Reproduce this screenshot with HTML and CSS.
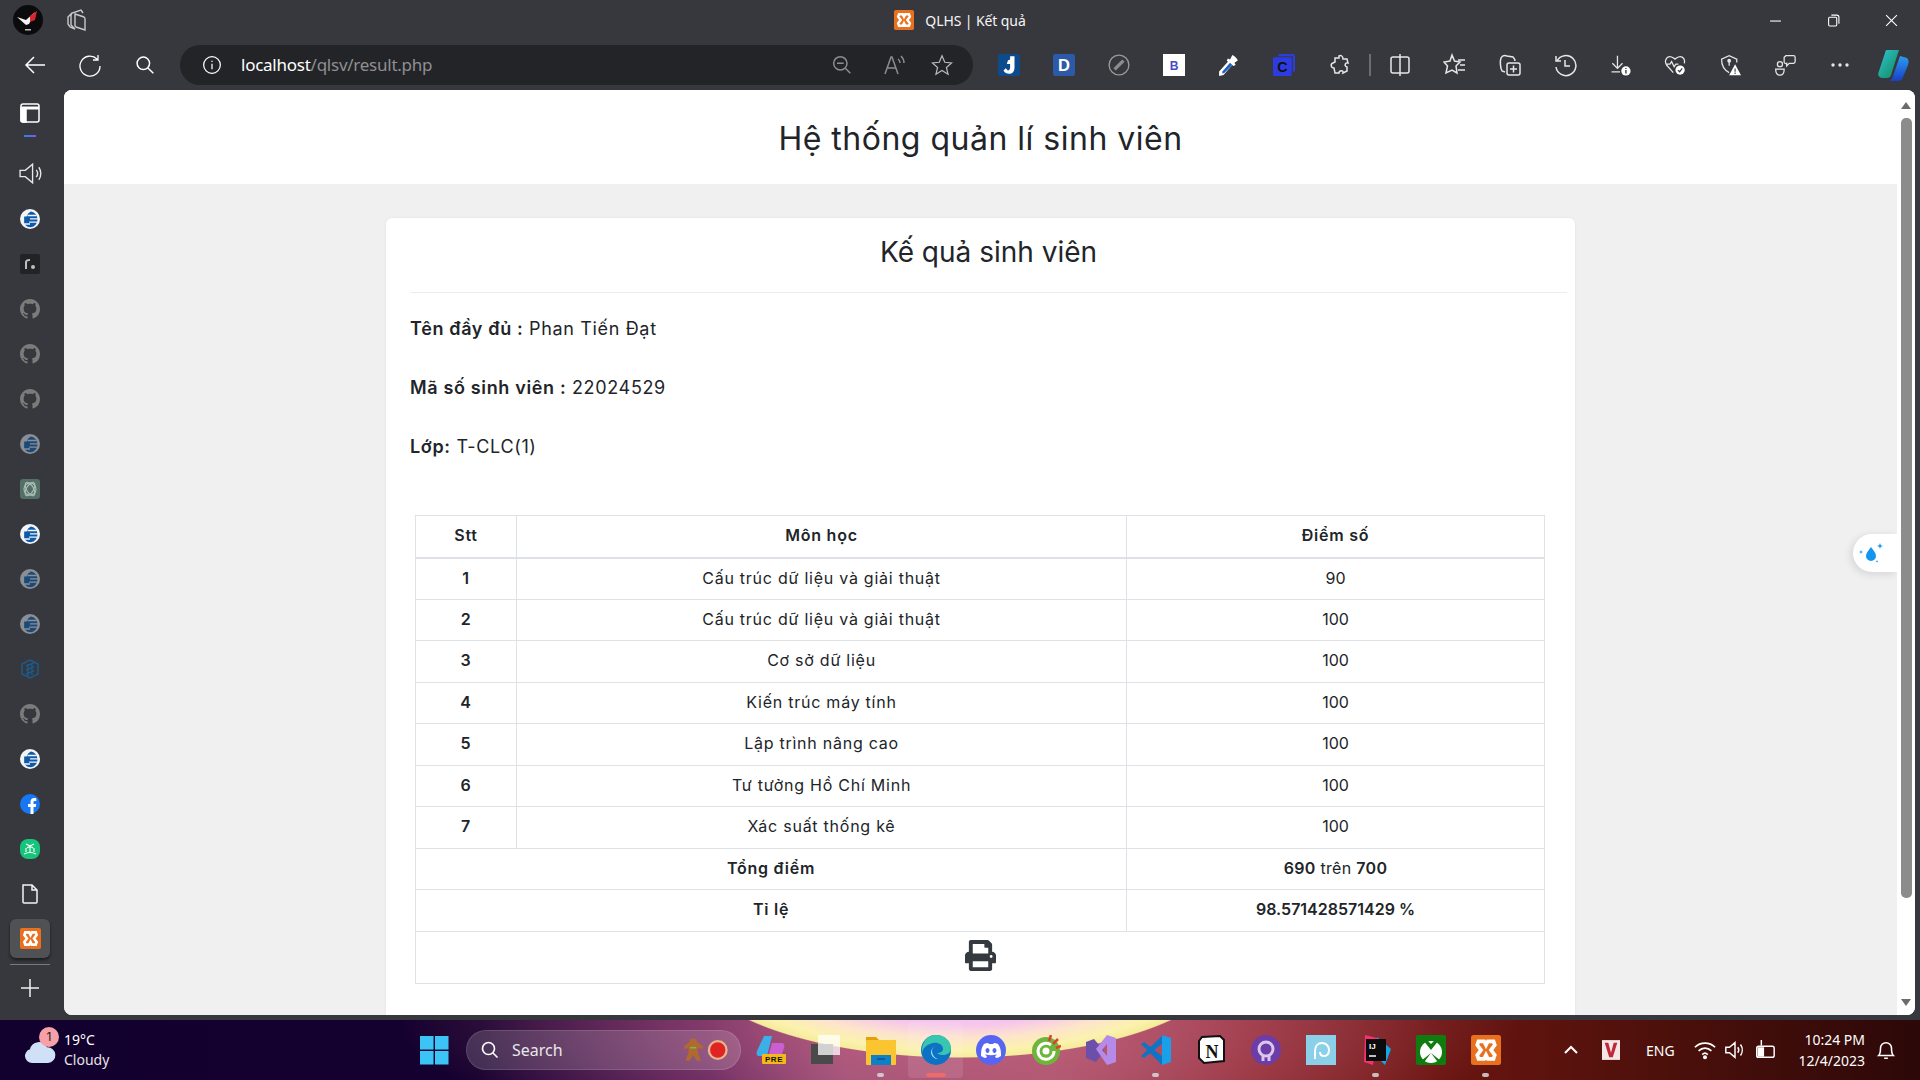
FILE: index.html
```html
<!DOCTYPE html>
<html lang="vi">
<head>
<meta charset="utf-8">
<title>QLHS | Kết quả</title>
<link rel="stylesheet" href="styles.css">
</head>
<body>
<svg class="defs" width="0" height="0">
  <defs>
    <symbol id="gh" viewBox="0 0 16 16"><path fill="#7b7b7b" d="M8 0C3.58 0 0 3.58 0 8c0 3.54 2.29 6.53 5.47 7.59.4.07.55-.17.55-.38 0-.19-.01-.82-.01-1.49-2.01.37-2.53-.49-2.69-.94-.09-.23-.48-.94-.82-1.13-.28-.15-.68-.52-.01-.53.63-.01 1.08.58 1.23.82.72 1.21 1.87.87 2.33.66.07-.52.28-.87.51-1.07-1.78-.2-3.64-.89-3.64-3.95 0-.87.31-1.59.82-2.15-.08-.2-.36-1.02.08-2.12 0 0 .67-.21 2.2.82.64-.18 1.32-.27 2-.27s1.36.09 2 .27c1.53-1.04 2.2-.82 2.2-.82.44 1.1.16 1.92.08 2.12.51.56.82 1.27.82 2.15 0 3.07-1.87 3.75-3.65 3.95.29.25.54.73.54 1.48 0 1.07-.01 1.93-.01 2.2 0 .21.15.46.55.38A8.01 8.01 0 0 0 16 8c0-4.42-3.58-8-8-8z"/></symbol>
    <symbol id="ce" viewBox="0 0 24 24"><circle cx="12" cy="12" r="12" fill="#f2f5f8"/><path fill="#0f5aa8" d="M13 3a9.500 9.500 0 0 1 8 9 9.500 9.500 0 0 1-8 10c-3 0-5-1-7-3h6v-2H5V9h3a9 9 0 0 1 5-6z"/><path fill="#f2f5f8" d="M9 7h11v1.600H9zM12 11h10v1.500H12zM11 15h10v1.600H11z"/></symbol>
    <symbol id="ced" viewBox="0 0 24 24"><circle cx="12" cy="12" r="12" fill="#8a8f95"/><path fill="#1c4a78" d="M13 3a9.500 9.500 0 0 1 8 9 9.500 9.500 0 0 1-8 10c-3 0-5-1-7-3h6v-2H5V9h3a9 9 0 0 1 5-6z"/><path fill="#8a8f95" d="M9 7h11v1.600H9zM12 11h10v1.500H12zM11 15h10v1.600H11z"/></symbol>
    <symbol id="xa" viewBox="0 0 24 24"><rect width="24" height="24" rx="2" fill="#e8701f"/><path fill="none" stroke="#fff" stroke-width="3" d="M6 5h4.500l1.500 3 1.500-3H18l1 3-3 4 3 4-1 3h-4.500L12 16l-1.500 3H6l-1-3 3-4-3-4z"/></symbol>
  </defs>
</svg>

<div class="window">
  <header class="titlebar">
    <div class="tb-left">
      <svg class="rog" viewBox="0 0 30 30"><circle cx="15" cy="15" r="15" fill="#0b0b0d"/><path fill="#f4f4f4" d="M4 12l9 3 9-8-6 12-3 1z"/><path fill="#d9262e" d="M17 11l7-5-2 9-5 2z"/><rect x="12" y="24" width="6" height="1.500" fill="#bbb"/></svg>
      <svg class="wico" viewBox="0 0 24 24" fill="none" stroke="#c9c9cb" stroke-width="1.400"><path d="M10 6l9 3a2 2 0 0 1 1 2v11l-9-3a2 2 0 0 1-1-2zM6 7l1-2 9-3 2 3M3 9l3-3v11l4 4-5-2-2-3z"/></svg>
    </div>
    <div class="tb-title"><svg class="fav" viewBox="0 0 24 24"><use href="#xa"/></svg><span>QLHS | Kết quả</span></div>
    <div class="tb-controls">
      <svg class="wbtn" viewBox="0 0 12 12" stroke="#fff" fill="none"><path d="M1 6.500h10"/></svg>
      <svg class="wbtn" viewBox="0 0 12 12" stroke="#fff" fill="none"><rect x="1.500" y="3" width="7.500" height="8" rx="1"/><path d="M4 1h5a2 2 0 0 1 2 2v6"/></svg>
      <svg class="wbtn" viewBox="0 0 12 12" stroke="#fff" fill="none"><path d="M1 1l10 10M11 1L1 11"/></svg>
    </div>
  </header>

  <nav class="toolbar">
    <div class="nav-btns">
      <div class="cell"><svg class="ico" viewBox="0 0 24 24" fill="none" stroke="#fff" stroke-width="1.500"><path d="M22 12H3M11 4l-8 8 8 8"/></svg></div>
      <div class="cell"><svg class="ico" viewBox="0 0 24 24" fill="none" stroke="#fff" stroke-width="1.300"><path d="M19 6a10 10 0 1 0 3 7M20 2v5h-5"/></svg></div>
      <div class="cell"><svg class="ico ico-s" viewBox="0 0 24 24" fill="none" stroke="#fff" stroke-width="1.800"><circle cx="10" cy="10" r="7.500"/><path d="M15.500 15.500L22 22"/></svg></div>
    </div>
    <div class="urlbar">
      <svg class="ico info" viewBox="0 0 24 24" fill="none" stroke="#fff" stroke-width="1.500"><circle cx="12" cy="12" r="10"/><path d="M12 10.500V17M12 7v1.500"/></svg>
      <span class="url"><b>localhost</b>/qlsv/result.php</span>
      <div class="url-right">
        <svg class="ico ico-s url-zoom" viewBox="0 0 24 24" fill="none" stroke="#8d8d90" stroke-width="1.800"><circle cx="10" cy="10" r="8"/><path d="M6 10h8M16 16l6 6"/></svg>
        <svg class="ico" viewBox="0 0 24 24" fill="none" stroke="#8d8d90" stroke-width="1.500"><path d="M3 21L9 4h1l6 17M5.500 15h8M16 6c1.500 1 2 2.500 2 4M19 3c2 2 3 4 3 7"/></svg>
        <svg class="ico ico-l" viewBox="0 0 24 24" fill="none" stroke="#bcbcbe" stroke-width="1.300"><path d="M12 2l3 7 7.500.7-5.700 5 1.800 7.300-6.600-4-6.600 4 1.800-7.300-5.700-5L9 9z"/></svg>
      </div>
    </div>
    <div class="tools">
      <div class="cell"><svg class="ico ico-l" viewBox="0 0 20 20"><rect width="20" height="20" rx="2" fill="#0d4b8c"/><path fill="#fff" d="M11 2h4v10c0 4-2 6-5 6-2 0-4-1-5-3l2-2 2 2c1 0 2-1 2-3V9H8l1-3 2-1z"/></svg></div>
      <div class="cell"><svg class="ico ico-l" viewBox="0 0 20 20"><rect width="20" height="20" rx="2" fill="#2d5aa8"/><text x="10" y="15.500" class="ictext">D</text></svg></div>
      <div class="cell"><svg class="ico ico-l" viewBox="0 0 20 20" fill="none"><circle cx="10" cy="10" r="9" stroke="#9a9a9c" stroke-width="1.200"/><path d="M6 14l8-8" stroke="#8d8d8f" stroke-width="3"/></svg></div>
      <div class="cell"><svg class="ico ico-l" viewBox="0 0 20 20"><rect width="20" height="20" fill="#fff"/><text x="10" y="14.500" class="ictext ictext-b">B</text></svg></div>
      <div class="cell"><svg class="ico ico-l" viewBox="0 0 20 20"><path fill="#fff" d="M13 1l2 1 2 2 1 2-3 2 1 2-2 1-1-1-8 9-4 1 0-4 8-9-1-1 1-2 2 1z"/><path fill="#1e5fc0" d="M11 8l2 2-7 7-2 1 0-2z"/></svg></div>
      <div class="cell"><svg class="ico ico-l" viewBox="0 0 20 20"><path fill="#2c3ce0" d="M5 0h13a2 2 0 0 1 2 2v14h-2V2H5z"/><rect y="3" width="17" height="17" rx="1" fill="#2c3ce0"/><text x="8.500" y="16" class="ictext ictext-d">C</text></svg></div>
      <div class="cell cell-ext"><svg class="ico" viewBox="0 0 24 24" fill="none" stroke="#e6e6e6" stroke-width="1.500"><path d="M10 3c2-1 4 0 4 3h4l1 4c-3-1-4 3-1 4v4l-4 2c1-3-4-3-4 0H6l-1-5c-3 0-4-4-1-5l2-1V5h4z"/></svg></div>
      <div class="sep"></div>
      <div class="cell"><svg class="ico" viewBox="0 0 24 24" fill="none" stroke="#e6e6e6" stroke-width="1.500"><rect x="3" y="4" width="18" height="16" rx="2"/><path d="M12 1v22"/></svg></div>
      <div class="cell"><svg class="ico" viewBox="0 0 24 24" fill="none" stroke="#e6e6e6" stroke-width="1.500"><path d="M9 2l2.500 6L17 9l-4 4 1 7-5-3-6 3 1.500-7L1 9l6-1zM15 7h7M17 12h5M15 17h7"/></svg></div>
      <div class="cell"><svg class="ico" viewBox="0 0 24 24" fill="none" stroke="#e6e6e6" stroke-width="1.500"><path d="M7 19l-3-1c-2-4-2-10-1-13 1-2 3-3 6-2l6 1c1 1 2 2 2 4"/><rect x="9" y="10" width="13" height="12" rx="2"/><path d="M15.500 12.500v7M12 16h7"/></svg></div>
      <div class="cell"><svg class="ico" viewBox="0 0 24 24" fill="none" stroke="#e6e6e6" stroke-width="1.500"><path d="M4 8a10 10 0 1 1-1 6M3 3v5h5M12 7v6h5"/></svg></div>
      <div class="cell"><svg class="ico ico-l" viewBox="0 0 26 26" fill="none" stroke="#e6e6e6" stroke-width="1.500"><path d="M10 2v15M4 11l6 6 6-6M3 21h10"/><circle cx="20" cy="20" r="5.500" fill="#fff" stroke="none"/><path d="M20 19v4M20 16.500v1.200" stroke="#37383d" stroke-width="1.600"/></svg></div>
      <div class="cell"><svg class="ico ico-l" viewBox="0 0 26 26" fill="none" stroke="#e6e6e6" stroke-width="1.500"><path d="M11 22l-8-9C0 8 3 3 7 3c3 0 4 2 6 3 2-1 3-3 6-3 4 0 6 4 5 8M2 12h5l2-3 3 6 2-3h3"/><circle cx="19" cy="19" r="5.500" fill="#fff" stroke="none"/><path d="M16.500 19l2 2 3-4" stroke="#37383d"/></svg></div>
      <div class="cell"><svg class="ico ico-l" viewBox="0 0 26 26" fill="none" stroke="#e6e6e6" stroke-width="1.500"><path d="M12 22C6 19 3 15 3 6l9-4 9 4v4M12 8v6"/><circle cx="12" cy="8" r="1.500" fill="#e6e6e6"/><path d="M19 12l7 13H12z" fill="#fff" stroke="none"/><path d="M19 17v4M19 22v1.500" stroke="#37383d" stroke-width="1.300"/></svg></div>
      <div class="cell"><svg class="ico ico-l" viewBox="0 0 26 26" fill="none" stroke="#e6e6e6" stroke-width="1.500"><circle cx="7" cy="12" r="3"/><path d="M2 18h10c0 5-2 7-5 7s-5-2-5-7zM14 2h9a2 2 0 0 1 2 2v5a2 2 0 0 1-2 2h-5l-3 3v-3a2 2 0 0 1-3-2V4z"/></svg></div>
      <div class="cell"><svg class="ico" viewBox="0 0 24 24" fill="#e6e6e6"><circle cx="5" cy="12" r="1.700"/><circle cx="12" cy="12" r="1.700"/><circle cx="19" cy="12" r="1.700"/></svg></div>
      <div class="cell cell-end"><svg class="ico ico-xl" viewBox="0 0 32 32"><defs><linearGradient id="cpa" x1="0" y1="0" x2="1" y2="1"><stop offset="0" stop-color="#2ec4d8"/><stop offset=".7" stop-color="#1a9a7c"/><stop offset="1" stop-color="#37c773"/></linearGradient><linearGradient id="cpb" x1="0" y1="0" x2="0" y2="1"><stop offset="0" stop-color="#2b9cf0"/><stop offset="1" stop-color="#1a3fc4"/></linearGradient></defs><path fill="url(#cpa)" d="M10 1h12l-1 3-7 22c-1 2-2 3-4 3H6C2 29 0 26 2 22L8 4c0-2 1-3 2-3z"/><path fill="url(#cpb)" d="M23 7l7 2c2 2 2 4 1 7l-5 12c-1 3-3 4-5 4H12c2-1 3-2 4-5z"/></svg></div>
    </div>
  </nav>

  <div class="body-row">
    <aside class="sidebar">
      <div class="side-top">
        <svg class="side-ico" viewBox="0 0 20 20" fill="none" stroke="#fff" stroke-width="1.500"><rect x="1" y="1" width="18" height="18" rx="2"/><path d="M1 5h18" stroke-width="3"/><path fill="#fff" d="M1 5h5v14H3a2 2 0 0 1-2-2z"/></svg>
      </div>
      <div class="side-strip"></div>
      <div class="side-item"><svg class="side-ico side-sound" viewBox="0 0 24 24" fill="none" stroke="#e8e8e8" stroke-width="1.300"><path d="M2 9h5l7-6v18l-7-6H2zM17.500 8.500c1.500 2 1.500 5 0 7M20 6c2.500 3.500 2.500 8.500 0 12"/></svg></div>
      <div class="side-item"><svg class="side-ico" viewBox="0 0 24 24"><use href="#ce"/></svg></div>
      <div class="side-item"><svg class="side-ico" viewBox="0 0 20 20"><rect width="20" height="20" rx="2" fill="#222326"/><path fill="#bdbdbd" d="M5 15V8c0-2 2-3 5-3v2c-2 0-3 0-3 2v6z"/><circle cx="13" cy="13" r="2" fill="#bdbdbd"/></svg></div>
      <div class="side-item"><svg class="side-ico" viewBox="0 0 16 16"><use href="#gh"/></svg></div>
      <div class="side-item"><svg class="side-ico" viewBox="0 0 16 16"><use href="#gh"/></svg></div>
      <div class="side-item"><svg class="side-ico" viewBox="0 0 16 16"><use href="#gh"/></svg></div>
      <div class="side-item"><svg class="side-ico" viewBox="0 0 24 24"><use href="#ced"/></svg></div>
      <div class="side-item"><svg class="side-ico" viewBox="0 0 20 20"><rect width="20" height="20" rx="3" fill="#546f66"/><g fill="none" stroke="#a9bdb5" stroke-width="1.200"><circle cx="10" cy="10" r="6"/><ellipse cx="10" cy="10" rx="7.500" ry="3.500" transform="rotate(60 10 10)"/><ellipse cx="10" cy="10" rx="7.500" ry="3.500" transform="rotate(-60 10 10)"/></g></svg></div>
      <div class="side-item"><svg class="side-ico" viewBox="0 0 24 24"><use href="#ce"/></svg></div>
      <div class="side-item"><svg class="side-ico" viewBox="0 0 24 24"><use href="#ced"/></svg></div>
      <div class="side-item"><svg class="side-ico" viewBox="0 0 24 24"><use href="#ced"/></svg></div>
      <div class="side-item"><svg class="side-ico" viewBox="0 0 20 20" fill="none" stroke="#1c5a8a" stroke-width="1.500"><path d="M10 1l8 4v10l-8 4-8-4V5zM6 7l8-3M6 11l8-3M6 15l8-3M8 5v12M12 4v12"/></svg></div>
      <div class="side-item"><svg class="side-ico" viewBox="0 0 16 16"><use href="#gh"/></svg></div>
      <div class="side-item"><svg class="side-ico" viewBox="0 0 24 24"><use href="#ce"/></svg></div>
      <div class="side-item"><svg class="side-ico" viewBox="0 0 20 20"><circle cx="10" cy="10" r="10" fill="#1877f2"/><path fill="#fff" d="M13.500 20v-7h2.300l.4-3h-2.700V8.300c0-.9.300-1.400 1.500-1.400h1.300V4.200c-.6-.1-1.300-.2-2-.2-2.400 0-3.800 1.400-3.800 3.900V10H8v3h2.500v7z"/></svg></div>
      <div class="side-item"><svg class="side-ico" viewBox="0 0 20 20"><rect width="20" height="20" rx="8" fill="#17c47c"/><path fill="none" stroke="#fff" stroke-width="1.100" d="M4 15c4-2 8-2 12 0M10 14V7M10 7L6 5M10 7l4-2M10 7L7 9M10 7l3 2M6 13V9M14 13V9"/></svg></div>
      <div class="side-item"><svg class="side-ico" viewBox="0 0 20 20" fill="none" stroke="#f2f2f2" stroke-width="1.500"><path d="M3 1h9l5 5v12a1 1 0 0 1-1 1H4a1 1 0 0 1-1-1zM12 1v5h5" /></svg></div>
      <div class="side-active"><svg class="side-ico side-xa" viewBox="0 0 24 24"><use href="#xa"/></svg></div>
      <div class="side-line"></div>
      <div class="side-plus"><svg class="side-ico" viewBox="0 0 20 20" fill="none" stroke="#f0f0f0" stroke-width="1.500"><path d="M10 1v18M1 10h18"/></svg></div>
    </aside>

    <div class="viewport">
      <main class="page">
        <div class="site-head"><h1>Hệ thống quản lí sinh viên</h1></div>
        <section class="card">
          <h2>Kế quả sinh viên</h2>
          <p class="meta"><strong>Tên đầy đủ :</strong> Phan Tiến Đạt</p>
          <p class="meta"><strong>Mã số sinh viên :</strong> 22024529</p>
          <p class="meta"><strong>Lớp:</strong> T-CLC(1)</p>
          <table>
            <colgroup><col class="c1"><col class="c2"><col class="c3"></colgroup>
            <thead><tr><th>Stt</th><th>Môn học</th><th>Điểm số</th></tr></thead>
            <tbody>
              <tr><th>1</th><td>Cấu trúc dữ liệu và giải thuật</td><td>90</td></tr>
              <tr><th>2</th><td>Cấu trúc dữ liệu và giải thuật</td><td>100</td></tr>
              <tr><th>3</th><td>Cơ sở dữ liệu</td><td>100</td></tr>
              <tr><th>4</th><td>Kiến trúc máy tính</td><td>100</td></tr>
              <tr><th>5</th><td>Lập trình nâng cao</td><td>100</td></tr>
              <tr><th>6</th><td>Tư tưởng Hồ Chí Minh</td><td>100</td></tr>
              <tr><th>7</th><td>Xác suất thống kê</td><td>100</td></tr>
              <tr><th colspan="2">Tổng điểm</th><td><strong>690</strong> trên <strong>700</strong></td></tr>
              <tr><th colspan="2">Tỉ lệ</th><th>98.571428571429 %</th></tr>
              <tr class="print-row"><td colspan="3"><svg class="printer" viewBox="0 0 512 512"><path fill="#343a40" d="M448 192V77.250c0-8.490-3.370-16.620-9.370-22.630L393.370 9.370c-6-6-14.140-9.370-22.630-9.370H96C78.330 0 64 14.330 64 32v160c-35.350 0-64 28.650-64 64v112c0 8.840 7.160 16 16 16h48v96c0 17.670 14.330 32 32 32h320c17.670 0 32-14.330 32-32v-96h48c8.840 0 16-7.160 16-16V256c0-35.350-28.650-64-64-64zm-64 256H128v-96h256v96zm0-224H128V64h192v48c0 8.840 7.160 16 16 16h48v96zm48 72c-13.250 0-24-10.750-24-24 0-13.260 10.750-24 24-24s24 10.740 24 24c0 13.250-10.750 24-24 24z"/></svg></td></tr>
            </tbody>
          </table>
        </section>
        <div class="float-tab"><svg class="drop" viewBox="0 0 26 22" fill="#1296f0"><path d="M13 4c3 4 5 6 5 9a5 5 0 0 1-10 0c0-3 2-5 5-9z"/><path d="M22 0l.8 2.200L25 3l-2.200.8L22 6l-.8-2.200L19 3l2.200-.8zM3 7l.6 1.400L5 9l-1.400.6L3 11l-.6-1.400L1 9l1.400-.6zM19 17l.4 1 1 .4-1 .4-.4 1-.4-1-1-.4 1-.4z"/></svg></div>
      </main>
      <div class="scrollbar">
        <span class="arrow up"></span>
        <span class="thumb"></span>
        <span class="arrow down"></span>
      </div>
    </div>
  </div>

  <footer class="taskbar">
    <div class="weather">
      <svg class="cloud" viewBox="0 0 32 26"><path fill="#cfe0f7" d="M8 24a7 7 0 0 1-2-13.700 9 9 0 0 1 17-2A7.500 7.500 0 0 1 24 24z"/></svg>
      <span class="badge">1</span>
      <div class="w-text"><span>19°C</span><span class="w-sub">Cloudy</span></div>
    </div>
    <div class="task-center">
      <svg class="tico win" viewBox="0 0 30 30"><g fill="#3cc4f6"><rect width="14" height="14"/><rect x="15.500" width="14" height="14"/><rect y="15.500" width="14" height="14"/><rect x="15.500" y="15.500" width="14" height="14"/></g></svg>
      <div class="search">
        <svg class="s-ico" viewBox="0 0 24 24" fill="none" stroke="#fff" stroke-width="2.200"><circle cx="10" cy="10" r="8"/><path d="M16 16l6 6"/></svg>
        <span>Search</span>
        <svg class="s-deco" viewBox="0 0 60 30"><path fill="#b06a2e" d="M12 0a4.500 4.500 0 0 1 5 5l8 5-1 4-6-2v6l4 11h-5l-5-7-5 7H2l4-11v-6l-5 2-1-4 7-5a4.500 4.500 0 0 1 5-5z"/><path fill="#6fc24a" d="M8 11h8v2H8z"/><circle cx="44" cy="15" r="13" fill="#e8b48c"/><circle cx="44" cy="15" r="10" fill="#e02424"/></svg>
      </div>
      <div class="apps">
        <div class="app"><svg class="tico" viewBox="0 0 30 30"><path fill="#3bb0e8" d="M8 1h8l-5 20H3C1 21 0 19 1 16z"/><path fill="#c95fd0" d="M16 8h9c3 0 4 2 3 5l-3 9H12z"/><rect x="6" y="19" width="24" height="10" rx="1" fill="#f5b915"/><text x="18" y="27" class="pre">PRE</text></svg></div>
        <div class="app"><svg class="tico" viewBox="0 0 30 30"><rect x="0" y="9" width="22" height="20" fill="#4a4a4a"/><rect x="7" y="0" width="22" height="20" fill="#fff" fill-opacity=".75"/></svg></div>
        <div class="app on"><svg class="tico" viewBox="0 0 30 30"><path fill="#e3a008" d="M0 2h10l3 3h17v6H0z"/><rect y="5" width="30" height="25" rx="1" fill="#fbc531"/><rect x="5" y="20" width="20" height="10" fill="#0f7fc8"/><path d="M11 24h8" stroke="#083d66"/></svg></div>
        <div class="app active"><svg class="tico" viewBox="0 0 30 30"><circle cx="15" cy="15" r="15" fill="#0d72c4"/><path fill="#37c6b0" d="M15 0c9 0 15 6 15 13 0 5-4 7-8 7-3 0-5-1-6-2 4 0 6-2 6-4 0-5-6-7-10-6C7 9 2 12 1 18 0 8 6 0 15 0z"/><path fill="#9fe3f5" d="M17 10a6 6 0 0 0-6 6c0 3 2 7 6 8-3 0-6-2-7-6 0-4 3-8 7-8z"/></svg></div>
        <div class="app"><svg class="tico" viewBox="0 0 30 30"><circle cx="15" cy="15" r="15" fill="#5865f2"/><path fill="#fff" d="M22 9c-2-1-3-1-4-1l-1 1h-4l-1-1c-1 0-2 0-4 1-3 4-3 8-3 12 2 1 3 2 5 2l1-2-2-1 1-.5c3 1 7 1 10 0l1 .5-2 1 1 2c2 0 3-1 5-2 0-4 0-8-3-12zM11.500 18c-1 0-2-1-2-2.500s1-2.500 2-2.500 2 1 2 2.500-1 2.500-2 2.500zm7 0c-1 0-2-1-2-2.500s1-2.500 2-2.500 2 1 2 2.500-1 2.500-2 2.500z"/></svg></div>
        <div class="app"><svg class="tico" viewBox="0 0 30 30"><circle cx="15" cy="16" r="14" fill="#6eb53c"/><path d="M20 10a8 8 0 1 0 3 6" fill="none" stroke="#fff" stroke-width="3"/><circle cx="15" cy="16" r="3.500" fill="#fff"/><path d="M18 6l2-6M22 9l5-5M25 13l5-2" stroke="#e0402c" stroke-width="2.500"/></svg></div>
        <div class="app"><svg class="tico" viewBox="0 0 30 30"><path fill="#6c4fa8" d="M0 7l8-3 10 12-8 11-10-4z"/><path fill="#b58ae8" d="M21 0l9 3v24l-9 3-11-16zm0 9l-5 6 5 6z"/></svg></div>
        <div class="app on"><svg class="tico" viewBox="0 0 30 30"><path fill="#1aa0e8" d="M21 0l9 3v24l-9 3z"/><path fill="#0d75c4" d="M21 0v9L8 19l-5 4-3-2 22-21z"/><path fill="#0d75c4" d="M0 9l3-2 18 14v9z"/></svg></div>
        <div class="app"><svg class="tico" viewBox="0 0 30 30"><path fill="#fff" stroke="#111" stroke-width="2" d="M6 2l18-1 4 4v21l-20 2-5-5V6z"/><text x="16" y="23" class="notion">N</text></svg></div>
        <div class="app"><svg class="tico" viewBox="0 0 30 30"><circle cx="15" cy="15" r="15" fill="#6c3ca8"/><circle cx="15" cy="14" r="7" fill="none" stroke="#d8c8ec" stroke-width="3"/><path d="M12 20v6M18 20v6" stroke="#d8c8ec" stroke-width="3"/></svg></div>
        <div class="app"><svg class="tico" viewBox="0 0 30 30"><rect width="30" height="30" fill="#8ad0e8"/><path fill="none" stroke="#fff" stroke-width="2" d="M9 24v-8c0-5 3-8 7-8s7 3 7 7-2 6-5 6c-3 0-4-2-4-4"/></svg></div>
        <div class="app on"><svg class="tico" viewBox="0 0 30 30"><path fill="#f5316f" d="M4 0l12 3-4 27-9-3z"/><path fill="#0fa9e6" d="M16 2l14 12-6 16-8-8z"/><rect x="5" y="4" width="20" height="22" fill="#0b0b0d"/><text x="8" y="14" class="ij">IJ</text><path d="M8 21h7" stroke="#fff" stroke-width="1.500"/></svg></div>
        <div class="app"><svg class="tico" viewBox="0 0 30 30"><rect width="30" height="30" rx="2" fill="#107c10"/><circle cx="15" cy="17" r="11" fill="#fff"/><path fill="#107c10" d="M15 15L7 5h4l4 4 4-4h4zM15 18l-6 8H5zM15 18l6 8h4z"/></svg></div>
        <div class="app on"><svg class="tico" viewBox="0 0 24 24"><use href="#xa"/></svg></div>
      </div>
    </div>
    <div class="tray">
      <svg class="tr-chev" viewBox="0 0 14 10" fill="none" stroke="#fff" stroke-width="2"><path d="M1 8l6-6 6 6"/></svg>
      <svg class="tr-v" viewBox="0 0 20 22"><rect width="20" height="22" fill="#f5e6e6"/><path fill="#c0283a" d="M3 3h4l3 11 3-11h4l-5 16H8z"/></svg>
      <span class="tr-lang">ENG</span>
      <div class="tr-sys">
        <svg class="tr-ico" viewBox="0 0 24 24" fill="none" stroke="#fff" stroke-width="1.800"><path d="M1 9c6-6 16-6 22 0M5 13c4-4 10-4 14 0M9 17c2-2 4-2 6 0"/><circle cx="12" cy="20" r="1.300" fill="#fff"/></svg>
        <svg class="tr-ico" viewBox="0 0 24 24" fill="none" stroke="#fff" stroke-width="1.600"><path d="M2 9h4l6-5v16l-6-5H2zM15 9c1.500 2 1.500 4 0 6M18 6c2.500 3.500 2.500 8.500 0 12"/></svg>
        <svg class="tr-ico" viewBox="0 0 24 24" fill="none" stroke="#fff" stroke-width="1.600"><rect x="3" y="8" width="19" height="12" rx="2"/><path d="M8 1v6M3 20h8" /><rect x="4" y="9" width="7" height="10" fill="#fff" stroke="none"/></svg>
      </div>
      <div class="clock"><span>10:24 PM</span><span>12/4/2023</span></div>
      <svg class="tr-bell" viewBox="0 0 24 24" fill="none" stroke="#fff" stroke-width="1.700"><path d="M4 18c2-2 2-4 2-8a6 6 0 0 1 12 0c0 4 0 6 2 8zM10 21h4"/></svg>
    </div>
  </footer>
</div>
</body>
</html>
```
FILE: styles.css
```css
* { box-sizing: border-box; }
html, body { margin: 0; height: 100%; overflow: hidden; }
body { font-family: "Inter", "Noto Sans", sans-serif; background: #37383d; }
svg { display: block; }
.defs { position: absolute; }
.window { display: flex; flex-direction: column; height: 1080px; width: 1920px; }

.titlebar { height: 40px; display: grid; grid-template-columns: 1fr auto 1fr; align-items: center; flex: none; }
.tb-left { display: flex; align-items: center; padding-left: 13px; gap: 22px; }
.rog { width: 30px; height: 30px; }
.wico { width: 24px; height: 24px; }
.tb-title { display: flex; align-items: center; gap: 11px; color: #f5f5f5; font: 14px "Noto Sans", sans-serif; letter-spacing: -.1px; }
.fav { width: 20px; height: 20px; }
.tb-controls { display: flex; justify-content: flex-end; padding-right: 22px; gap: 45px; }
.wbtn { width: 13px; height: 13px; }

.toolbar { height: 50px; display: flex; align-items: center; flex: none; }
.nav-btns { display: flex; width: 180px; padding-left: 7px; }
.cell { width: 55px; height: 40px; display: flex; align-items: center; justify-content: center; flex: none; }
.cell-ext { margin-left: 2px; }
.cell-end { margin-left: -2px; }
.ico { width: 24px; height: 24px; }
.ico-s { width: 20px; height: 20px; }
.ico-l { width: 22px; height: 22px; }
.ico-xl { width: 32px; height: 32px; }
.urlbar { width: 793px; height: 40px; background: #232427; border-radius: 20px; display: flex; align-items: center; padding-left: 22px; flex: none; }
.info { width: 20px; height: 20px; }
.url { margin: -2px 0 0 19px; font: 17px "Noto Sans", sans-serif; color: #8f8f92; letter-spacing: -.25px; }
.url b { font-weight: 400; color: #fff; }
.url-right { margin-left: auto; display: flex; align-items: center; gap: 25px; padding-right: 20px; }
.url-zoom { margin-right: 5px; }
.tools { display: flex; align-items: center; margin-left: auto; }
.sep { width: 2px; height: 22px; background: #6c6d70; margin: 0 1px; }
.ictext { font: 700 15px "Liberation Sans", sans-serif; fill: #fff; text-anchor: middle; }
.ictext-b { font-size: 11px; fill: #4a4ac8; }
.ictext-d { font-size: 13px; fill: #111; }

.body-row { flex: 1; display: flex; min-height: 0; }
.sidebar { width: 64px; display: flex; flex-direction: column; align-items: center; padding-right: 4px; flex: none; }
.side-ico { width: 20px; height: 20px; }
.side-sound { width: 25px; height: 25px; }
.side-top { height: 45px; display: flex; align-items: center; justify-content: center; }
.side-strip { width: 12px; height: 2px; margin: 0 0 5px; background: linear-gradient(90deg, #2a7ff0, #7a5ce8); flex: none; }
.side-item { height: 45px; width: 100%; display: flex; align-items: center; justify-content: center; flex: none; }
.side-item:nth-child(3) { margin-top: 9px; }
.side-active { width: 40px; height: 39px; margin-top: 3px; border-radius: 6px; background: #505154; box-shadow: 0 2px 3px #1c1c1e; display: flex; align-items: center; justify-content: center; flex: none; }
.side-xa { width: 21px; height: 21px; }
.side-line { width: 40px; height: 1px; margin-top: 6px; background: #77787b; flex: none; }
.side-plus { height: 45px; display: flex; align-items: center; justify-content: center; flex: none; }

.viewport { flex: 1; display: flex; min-width: 0; margin: 0 5px 5px 0; background: #fff; border-radius: 8px; overflow: hidden; }
.page { flex: 1; background: #f0f0f0; position: relative; overflow: hidden; min-width: 0; }
.site-head { height: 94px; padding-top: 2px; background: #fff; display: flex; align-items: center; justify-content: center; }
.site-head h1 { margin: 0; font-size: 32px; font-weight: 400; color: #212529; letter-spacing: .5px; }
.card { width: 1189px; margin: 34px 0 0 322px; padding: 0 8px 0 24px; background: #fff; border-radius: 6px; box-shadow: 0 0 3px rgba(0,0,0,.06); height: 900px; }
.card h2 { margin: 0 0 22px; height: 75px; line-height: 68px; font-size: 28px; font-weight: 400; text-align: center; color: #212529; border-bottom: 1px solid #ececec; }
.meta { margin: 0 0 32px; font-size: 18px; line-height: 27px; color: #212529; letter-spacing: .65px; }
.meta strong { font-weight: 600; }
table { border-collapse: collapse; width: 1129px; margin: 55px 0 0 5px; table-layout: fixed; font-size: 16px; color: #212529; text-align: center; }
.c1 { width: 101px; } .c2 { width: 610px; } .c3 { width: 418px; }
th, td { border: 1px solid #dee2e6; padding: 0 0 2px; height: 41.500px; font-weight: 400; letter-spacing: .75px; }
th, td strong { font-weight: 600; }
thead th { height: 42px; border-bottom-width: 2px; }
tbody td:last-child, tbody th:last-child { letter-spacing: 0; }
tbody tr:nth-child(8) td:last-child { letter-spacing: .3px; }
.print-row td { height: 52px; padding-bottom: 4px; }
.printer { width: 31px; height: 31px; margin: 0 auto; }
.float-tab { position: absolute; right: 0; top: 444px; width: 44px; height: 38px; background: #fff; border-radius: 19px 0 0 19px; box-shadow: -2px 2px 8px rgba(0,0,0,.12); padding: 9px 0 0 5px; }
.drop { width: 26px; height: 22px; }

.scrollbar { width: 18px; background: #fff; display: flex; flex-direction: column; align-items: center; flex: none; }
.arrow { width: 0; height: 0; border-left: 5px solid transparent; border-right: 5px solid transparent; flex: none; }
.arrow.up { border-bottom: 7px solid #6c6c6c; margin-top: 12px; }
.thumb { width: 11px; height: 780px; margin-top: 9px; background: #8c8c8c; border-radius: 5px; flex: none; }
.arrow.down { border-top: 7px solid #6c6c6c; margin-top: auto; margin-bottom: 9px; }

.taskbar { height: 60px; flex: none; display: flex; align-items: center; position: relative; color: #fff;
  background:
    radial-gradient(ellipse 271px 100px at 960px -62px, #f2b8ee 0, #f6c4ee 66%, #fde4cc 80%, #fbf2ae 92%, #f6eb9c 99%, transparent 100%),
    radial-gradient(ellipse 560px 140px at 960px 0, rgba(196,96,128,.85), transparent 100%),
    linear-gradient(90deg, #12002e 0, #15012f 25%, #4c1a5a 37%, #915078 44%, #a65468 55%, #8e2c30 65%, #6a1510 75%, #4c100b 87%, #2c0808 100%); }
.weather { display: flex; align-items: center; width: 420px; padding-left: 24px; height: 100%; position: relative; flex: none; }
.cloud { width: 32px; height: 26px; margin-top: 4px; }
.badge { position: absolute; left: 39px; top: 7px; width: 20px; height: 20px; border-radius: 50%; background: #f8a0a8; color: #222; font-size: 12px; line-height: 20px; text-align: center; }
.w-text { display: flex; flex-direction: column; margin-left: 8px; font: 14px/20px "Noto Sans", sans-serif; }
.w-sub { color: #e4e4e4; }
.task-center { display: flex; align-items: center; flex: none; }
.tico { width: 30px; height: 30px; }
.win { width: 29px; height: 29px; }
.search { width: 275px; height: 40px; margin-left: 17px; border-radius: 20px; background: rgba(255,255,255,.16); border: 1px solid rgba(255,255,255,.12); display: flex; align-items: center; padding-left: 14px; font: 16px "Noto Sans", sans-serif; color: #e8e8e8; }
.s-ico { width: 18px; height: 18px; margin-right: 13px; }
.s-deco { width: 46px; height: 30px; margin-left: auto; margin-right: 10px; }
.apps { display: flex; margin-left: 2px; }
.app { width: 55px; height: 56px; display: flex; align-items: center; justify-content: center; position: relative; flex: none; }
.app.on::after { content: ""; position: absolute; bottom: 1px; width: 7px; height: 4px; border-radius: 2px; background: #d8d8d8; opacity: .85; }
.app.active { background: rgba(255,255,255,.1); border-radius: 4px; }
.app.active::after { content: ""; position: absolute; bottom: 1px; width: 20px; height: 4px; border-radius: 2px; background: #f06a6a; }
.pre { font: 700 8px "Liberation Sans", sans-serif; fill: #111; text-anchor: middle; letter-spacing: .5px; }
.notion { font: 700 18px "Liberation Serif", serif; fill: #111; text-anchor: middle; }
.ij { font: 700 8px "Liberation Sans", sans-serif; fill: #fff; }
.tray { margin-left: auto; display: flex; align-items: center; height: 100%; padding-right: 23px; }
.tr-chev { width: 14px; height: 10px; }
.tr-v { width: 18px; height: 20px; margin-left: 24px; }
.tr-lang { font: 14px "Noto Sans", sans-serif; margin-left: 26px; width: 32px; }
.tr-sys { display: flex; gap: 8px; margin-left: 16px; }
.tr-ico { width: 22px; height: 22px; }
.clock { display: flex; flex-direction: column; align-items: flex-end; margin-left: 19px; font: 14px/21px "Noto Sans", sans-serif; width: 70px; }
.tr-bell { width: 22px; height: 22px; margin-left: 10px; }
```
